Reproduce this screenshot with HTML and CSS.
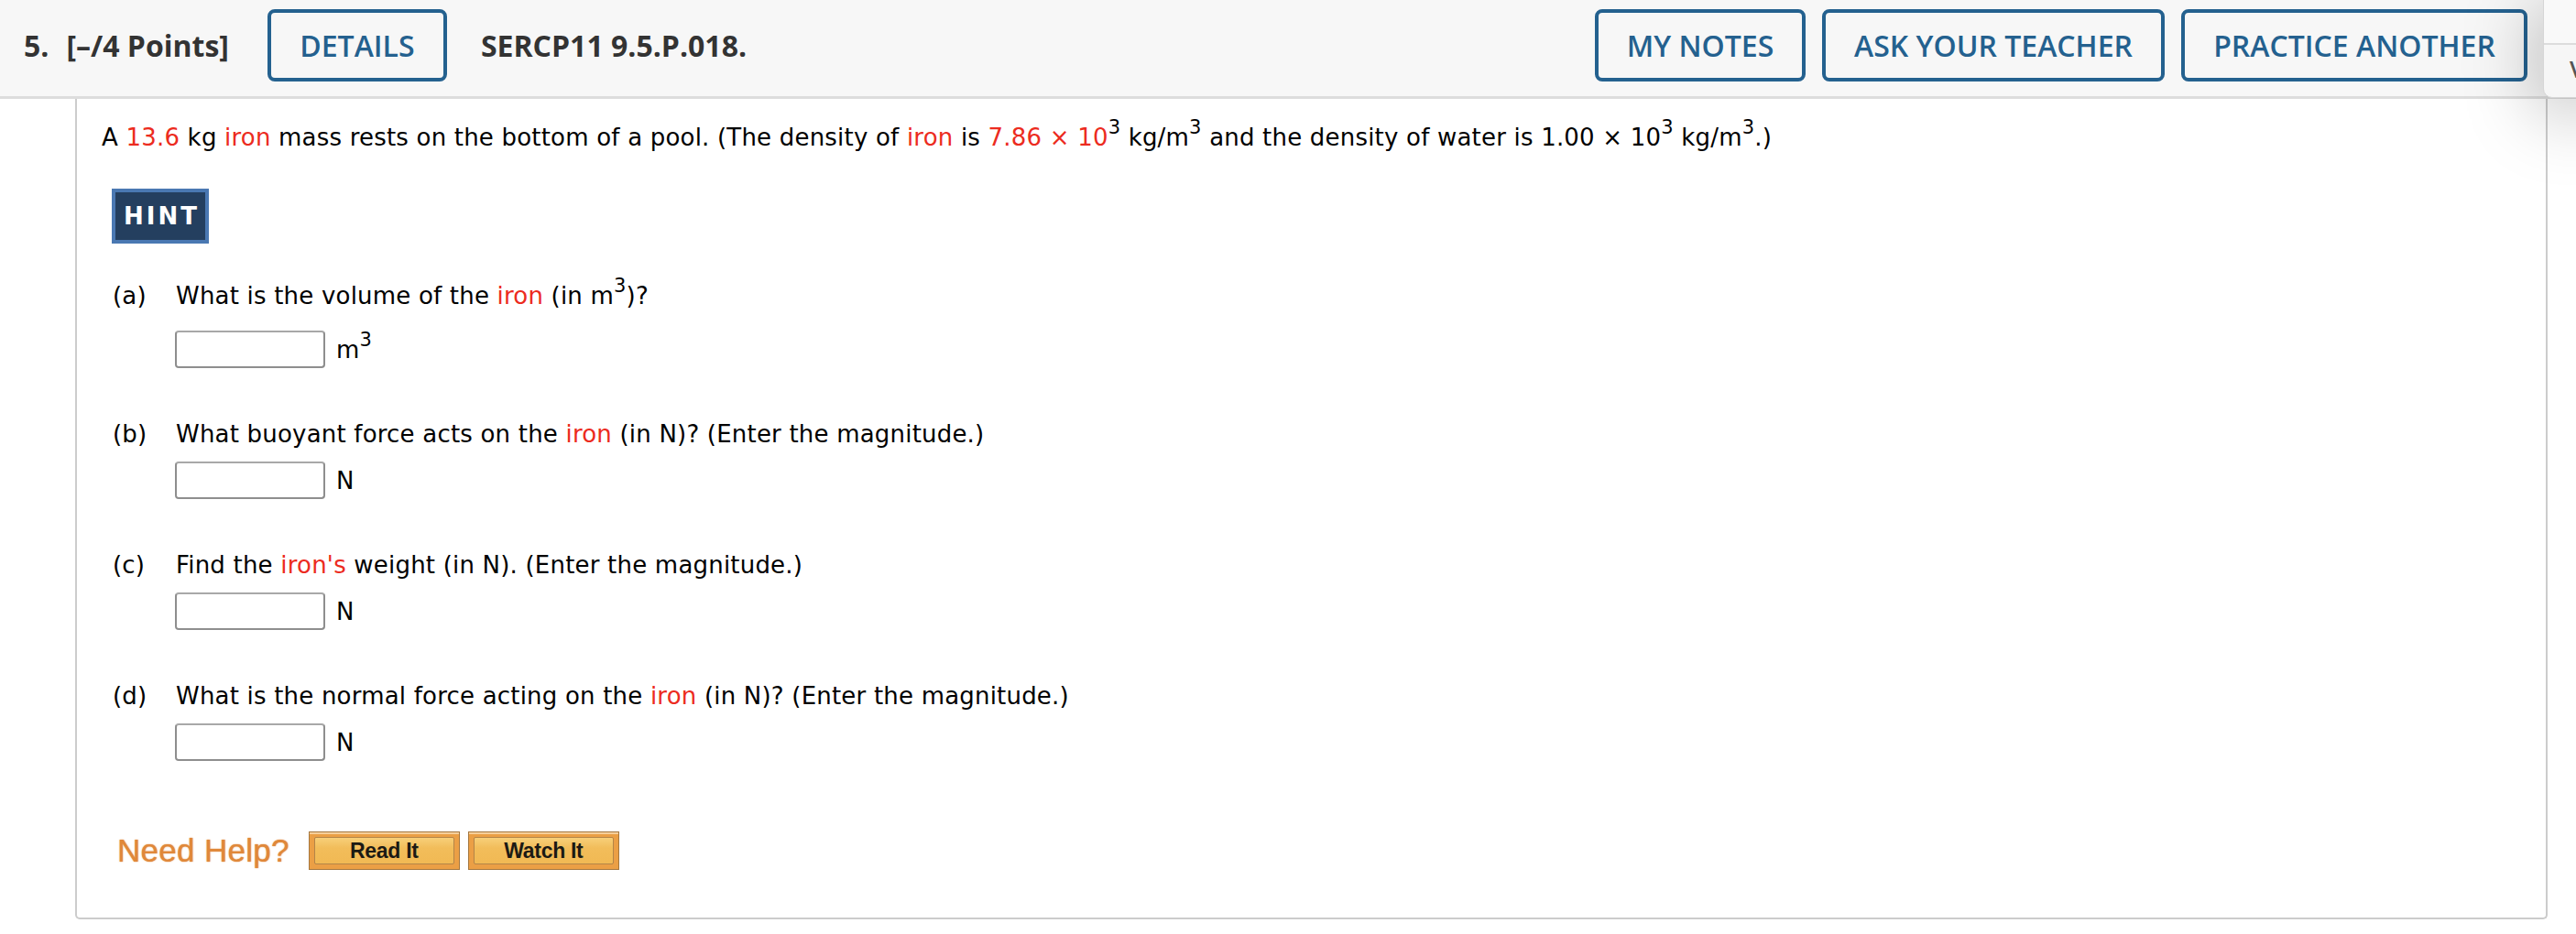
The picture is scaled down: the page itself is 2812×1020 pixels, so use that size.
FILE: index.html
```html
<!DOCTYPE html>
<html lang="en">
<head>
<meta charset="utf-8">
<title>SERCP11 9.5.P.018.</title>
<link rel="stylesheet" href="styles.css">
</head>
<body>
<div class="page">
  <header class="qhead">
    <span class="qnum">5.</span>
    <span class="qpts">[–/4 Points]</span>
    <span class="btn btn-details">DETAILS</span>
    <span class="qid">SERCP11 9.5.P.018.</span>
    <div class="qactions">
      <span class="btn btn-notes">MY NOTES</span>
      <span class="btn btn-ask">ASK YOUR TEACHER</span>
      <span class="btn btn-practice">PRACTICE ANOTHER</span>
    </div>
  </header>

  <div class="sidepanel">
    <div class="sidepanel-top"></div>
    <div class="sidepanel-bottom">V</div>
  </div>

  <main class="card">
    <p class="prompt">A <span class="red">13.6</span> kg <span class="red">iron</span> mass rests on the bottom of a pool. (The density of <span class="red">iron</span> is <span class="red">7.86 × 10</span><sup>3</sup> kg/m<sup>3</sup> and the density of water is 1.00 × 10<sup>3</sup> kg/m<sup>3</sup>.)</p>

    <div class="hint">HINT</div>

    <section class="part part-first">
      <div class="part-q"><span class="part-label">(a)</span><span>What is the volume of the <span class="red">iron</span> (in m<sup>3</sup>)?</span></div>
      <div class="answer answer-tall"><span class="field"></span><span class="unit">m<sup>3</sup></span></div>
    </section>

    <section class="part">
      <div class="part-q"><span class="part-label">(b)</span><span>What buoyant force acts on the <span class="red">iron</span> (in N)? (Enter the magnitude.)</span></div>
      <div class="answer"><span class="field"></span><span class="unit">N</span></div>
    </section>

    <section class="part">
      <div class="part-q"><span class="part-label">(c)</span><span>Find the <span class="red">iron's</span> weight (in N). (Enter the magnitude.)</span></div>
      <div class="answer"><span class="field"></span><span class="unit">N</span></div>
    </section>

    <section class="part">
      <div class="part-q"><span class="part-label">(d)</span><span>What is the normal force acting on the <span class="red">iron</span> (in N)? (Enter the magnitude.)</span></div>
      <div class="answer"><span class="field"></span><span class="unit">N</span></div>
    </section>

    <div class="help">
      <span class="help-label">Need Help?</span>
      <span class="help-btn"><span class="help-inner">Read It</span></span>
      <span class="help-btn"><span class="help-inner">Watch It</span></span>
    </div>
  </main>
</div>
</body>
</html>
```

FILE: styles.css
```css
html, body {
  margin: 0;
  padding: 0;
  background: #ffffff;
  overflow: hidden;
}

.page {
  position: relative;
  width: 2812px;
  height: 1020px;
  overflow: hidden;
}

/* ---------- header ---------- */
.qhead {
  display: flex;
  align-items: center;
  height: 99px;
  padding: 0 53px 6px 26px;
  background: #f7f7f7;
  border-bottom: 3px solid #dddddd;
  font-family: "Open Sans", "Liberation Sans", sans-serif;
  color: #333333;
}

.qnum,
.qpts,
.qid {
  font-size: 32px;
  font-weight: 700;
  color: #333333;
}

.qpts {
  margin-left: 19px;
}

.qid {
  margin-left: 37px;
}

.btn {
  box-sizing: border-box;
  display: flex;
  align-items: center;
  justify-content: center;
  height: 79px;
  border: 4px solid #24618f;
  border-radius: 8px;
  font-size: 32px;
  font-weight: 600;
  color: #24618f;
  background: #f7f7f7;
}

.btn-details {
  width: 196px;
  margin-left: 42px;
}

.qactions {
  display: flex;
  gap: 18px;
  margin-left: auto;
}

.btn-notes { width: 230px; }
.btn-ask { width: 374px; }
.btn-practice { width: 378px; }

/* ---------- right floating panel ---------- */
.sidepanel {
  position: absolute;
  left: 2776px;
  top: -12px;
  width: 80px;
  height: 119px;
  box-sizing: border-box;
  background: #f6f6f6;
  border: 1px solid #d6d6d6;
  border-radius: 0 0 0 10px;
  box-shadow: -6px 16px 80px rgba(0, 0, 0, 0.26);
  z-index: 5;
}

.sidepanel-top {
  height: 58px;
  border-bottom: 2px solid #dcdcdc;
  background: #f9f9f9;
}

.sidepanel-bottom {
  padding: 8px 0 0 28px;
  font-family: "Open Sans", "Liberation Sans", sans-serif;
  font-size: 26px;
  font-weight: 600;
  color: #555555;
}

/* ---------- question card ---------- */
.card {
  box-sizing: border-box;
  width: 2699px;
  margin-left: 82px;
  padding: 24px 0 52px 27px;
  border: 2px solid #cccccc;
  border-top: none;
  border-radius: 0 0 5px 5px;
  font-family: "DejaVu Sans", Verdana, sans-serif;
  font-size: 26px;
  letter-spacing: 0.2px;
  color: #000000;
}

.prompt {
  margin: 0;
  line-height: 36px;
}

.red {
  color: #ec2b20;
}

sup {
  font-size: 21px;
  line-height: 0;
  vertical-align: 13px;
}

.hint {
  box-sizing: border-box;
  width: 106px;
  height: 60px;
  margin: 38px 0 0 11px;
  display: flex;
  align-items: center;
  justify-content: center;
  background: #243f5f;
  border: 4px solid #4a78b2;
  color: #ffffff;
  font-weight: 700;
  font-size: 26px;
  letter-spacing: 3px;
  text-indent: 3px;
}

.part {
  margin: 54px 0 0 12px;
}

.part-first {
  margin-top: 39px;
}

.part-q {
  display: flex;
  line-height: 36px;
}

.part-label {
  width: 69px;
  flex: none;
}

.answer {
  display: flex;
  align-items: center;
  gap: 12px;
  margin: 12px 0 0 68px;
}

.answer-tall {
  margin-top: 20px;
}

.field {
  box-sizing: border-box;
  width: 164px;
  height: 41px;
  border: 2px solid #8e8e8e;
  border-top-color: #a8a8a8;
  border-radius: 4px;
  background: #ffffff;
}

.unit {
  line-height: 36px;
}

/* ---------- need help ---------- */
.help {
  display: flex;
  align-items: center;
  margin: 77px 0 0 17px;
  height: 42px;
}

.help-label {
  font-family: "Liberation Sans", Arial, sans-serif;
  font-size: 35px;
  letter-spacing: 0.3px;
  color: #e0883a;
  margin-right: 21px;
  text-shadow: 0 0 1px rgba(224, 136, 58, 0.9), 0 0 2px rgba(224, 136, 58, 0.4);
}

.help-btn {
  box-sizing: border-box;
  display: flex;
  width: 165px;
  height: 42px;
  padding: 5px 5px;
  margin-right: 9px;
  background: #eb9f45;
  border: 1px solid #a4773f;
  box-shadow: inset 0 2px 0 #f6cf9a;
}

.help-inner {
  flex: 1;
  display: flex;
  align-items: center;
  justify-content: center;
  border: 1px solid #b48548;
  border-radius: 2px;
  background: linear-gradient(#f7cf79, #f2bd5a 40%, #f1b954);
  font-family: "Liberation Sans", Arial, sans-serif;
  font-weight: 700;
  font-size: 23px;
  color: #1c1a14;
  letter-spacing: -0.3px;
}
```
